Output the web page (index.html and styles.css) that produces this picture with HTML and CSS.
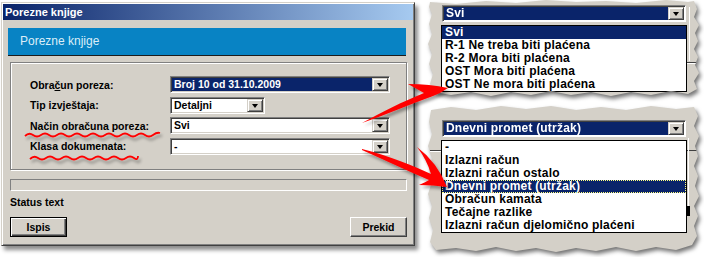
FILE: index.html
```html
<!DOCTYPE html>
<html lang="hr">
<head>
    <meta charset="UTF-8">
    <title>Porezne knjige</title>
    <link rel="stylesheet" href="styles.css">
</head>
<body>
<div class="stage">

    <div class="dialog">
        <div class="titlebar">Porezne knjige</div>
        <div class="dialog-body">
            <div class="banner">Porezne knjige</div>

            <div class="group">
                <div class="row">
                    <span class="label">Obra<u>č</u>un poreza:</span>
                    <div class="combo wide">
                        <span class="value selected">Broj 10 od 31.10.2009</span>
                        <span class="drop"></span>
                    </div>
                </div>
                <div class="row">
                    <span class="label">Tip izvještaja:</span>
                    <div class="combo narrow">
                        <span class="value">Detaljni</span>
                        <span class="drop"></span>
                    </div>
                </div>
                <div class="row">
                    <span class="label">Način obračuna poreza:</span>
                    <div class="combo wide">
                        <span class="value">Svi</span>
                        <span class="drop"></span>
                    </div>
                </div>
                <div class="row">
                    <span class="label">Klasa dokumenata:</span>
                    <div class="combo wide">
                        <span class="value">-</span>
                        <span class="drop"></span>
                    </div>
                </div>
            </div>

            <div class="progress"></div>
            <div class="status">Status text</div>

            <div class="buttons">
                <button class="btn default">Ispis</button>
                <button class="btn">Prekid</button>
            </div>
        </div>
    </div>

    <!-- isjecak: nacin obracuna -->
    <div class="piece piece-top">
        <div class="paper paper-top">
            <span class="deco" style="left:260px;top:63px;width:12px;height:1px;background:#404040"></span>
            <span class="deco" style="left:260px;top:64px;width:12px;height:1px;background:#fff"></span>
            <span class="deco" style="left:263px;top:8px;width:1px;height:54px;background:#fff"></span>
            <div class="big-combo">
                <span class="value selected">Svi</span>
                <span class="drop"></span>
            </div>
            <ul class="list">
                <li class="active">Svi</li>
                <li>R-1 Ne treba biti plaćena</li>
                <li>R-2 Mora biti plaćena</li>
                <li>OST Mora biti plaćena</li>
                <li>OST Ne mora biti plaćena</li>
            </ul>
        </div>
    </div>

    <!-- isjecak: klasa dokumenata -->
    <div class="piece piece-bottom">
        <div class="paper paper-bottom">
            <span class="deco" style="left:4px;top:46px;width:12px;height:1px;background:#404040"></span>
            <span class="deco" style="left:4px;top:47px;width:12px;height:1px;background:#fff"></span>
            <span class="deco" style="left:260px;top:46px;width:12px;height:1px;background:#404040"></span>
            <span class="deco" style="left:262px;top:34px;width:1px;height:76px;background:#fff"></span>
            <span class="deco" style="left:261px;top:102px;width:3px;height:10px;background:#000"></span>
            <div class="big-combo">
                <span class="value selected">Dnevni promet (utržak)</span>
                <span class="drop"></span>
            </div>
            <ul class="list">
                <li>-</li>
                <li>Izlazni račun</li>
                <li>Izlazni račun ostalo</li>
                <li class="active focus">Dnevni promet (utržak)</li>
                <li>Obračun kamata</li>
                <li>Tečajne razlike</li>
                <li>Izlazni račun djelomično plaćeni</li>
            </ul>
        </div>
    </div>

    <svg class="marks" width="704" height="257" viewBox="0 0 704 257">
        <defs>
            <filter id="sjena" x="-20%" y="-50%" width="140%" height="200%">
                <feDropShadow dx="2" dy="3" stdDeviation="1.6" flood-color="#000" flood-opacity="0.35"/>
            </filter>
        </defs>
        <g filter="url(#sjena)">
            <path class="wave" d="M25 136 q4 -4 8 -1 t8 0 t8 0 t8 0 t8 0 t8 0 t8 0 t8 0 t8 0 t8 0 t8 0 t8 0 t8 0 t8 0 t8 0 t8 0 t7 -2"/>
            <path class="wave" d="M30 159 q4 -4 8 -1 t8 0 t8 0 t8 0 t8 0 t8 0 t8 0 t8 0 t8 0 t8 0 t8 0 t8 0 t8 0 t4 -2"/>
            <path class="arrow" d="M362 123 C380 113 404 101 424 93 L408 84 Q430 84 448 88 Q441 93 433 96 C410 104 386 115 362 123 Z"/>
            <path class="arrow" d="M362 149 C390 156 414 166 431 174 Q427 160 417 147 Q437 162 447 187 Q433 185 419 185 Q426 182 429 180 C408 171 385 160 362 150 Z"/>
        </g>
    </svg>

</div>
</body>
</html>
```

FILE: styles.css
```css
body {
    margin: 0;
    background-color: #ffffff;
    font-family: "Liberation Sans", Arial, sans-serif;
    overflow: hidden;
}

.stage {
    position: relative;
    width: 704px;
    height: 257px;
    padding: 2px 0 0 1px;
    box-sizing: border-box;
}

/* glavni prozor */
.dialog {
    width: 414px;
    height: 244px;
    box-sizing: border-box;
    padding: 1px;
    background-color: #d4d0c8;
    border: 1px solid;
    border-color: #d4d0c8 #404040 #404040 #d4d0c8;
    box-shadow: inset 1px 1px 0 #ffffff, inset -1px -1px 0 #808080, 3px 4px 4px rgba(0, 0, 0, 0.45);
}

.titlebar {
    height: 16px;
    line-height: 16px;
    padding-left: 2px;
    color: #ffffff;
    font-size: 11px;
    font-weight: bold;
    background: linear-gradient(to right, #0a246a, #a6caf0);
}

.dialog-body {
    padding: 8px 6px 0 7px;
}

.banner {
    height: 28px;
    box-sizing: border-box;
    margin: 0 1px 0 -2px;
    padding-left: 12px;
    line-height: 27px;
    font-size: 12px;
    color: #dbeef8;
    background-color: #0883c4;
    border-bottom: 1px solid #1c1c1c;
}

.group {
    margin-top: 6px;
    height: 108px;
    box-sizing: border-box;
    padding: 13px 0 0 19px;
    border: 1px solid #808080;
    box-shadow: inset 1px 1px 0 #ffffff, 1px 1px 0 #ffffff;
    display: flex;
    flex-direction: column;
    gap: 3.5px;
}

.row {
    display: flex;
    align-items: center;
}

.label {
    width: 140px;
    font-size: 10.5px;
    font-weight: bold;
    color: #000000;
}

.label u {
    text-decoration-thickness: 1px;
}

.combo {
    height: 17px;
    box-sizing: border-box;
    padding: 1px;
    display: flex;
    background-color: #ffffff;
    border: 1px solid;
    border-color: #808080 #ffffff #ffffff #808080;
    box-shadow: inset 1px 1px 0 #404040, inset -1px -1px 0 #d4d0c8;
}

.combo.wide {
    width: 220px;
}

.combo.narrow {
    width: 95px;
}

.value {
    flex: 1;
    padding-left: 2px;
    line-height: 13px;
    font-size: 10.5px;
    font-weight: bold;
    color: #000000;
    white-space: nowrap;
    overflow: hidden;
}

.value.selected {
    background-color: #0a246a;
    color: #ffffff;
}

.drop {
    position: relative;
    width: 16px;
    height: 13px;
    box-sizing: border-box;
    background-color: #d4d0c8;
    border: 1px solid;
    border-color: #d4d0c8 #404040 #404040 #d4d0c8;
    box-shadow: inset 1px 1px 0 #ffffff, inset -1px -1px 0 #808080;
    display: flex;
    align-items: center;
    justify-content: center;
}

.drop::after {
    content: "";
    border-left: 3.5px solid transparent;
    border-right: 3.5px solid transparent;
    border-top: 4px solid #000000;
    margin-top: 1px;
}

.progress {
    margin-top: 9px;
    height: 12px;
    box-sizing: border-box;
    border: 1px solid;
    border-color: #808080 #ffffff #ffffff #808080;
}

.status {
    margin-top: 5px;
    line-height: 13px;
    font-size: 10.5px;
    font-weight: bold;
}

.buttons {
    margin-top: 8px;
    display: flex;
    justify-content: space-between;
}

.btn {
    width: 57px;
    height: 20px;
    padding: 0;
    font-family: "Liberation Sans", Arial, sans-serif;
    font-size: 10.5px;
    font-weight: bold;
    color: #000000;
    background-color: #d4d0c8;
    border: 1px solid;
    border-color: #ffffff #404040 #404040 #ffffff;
    box-shadow: inset -1px -1px 0 #808080;
}

.btn.default {
    border-color: #000000;
    box-shadow: inset 1px 1px 0 #ffffff, inset -1px -1px 0 #404040, inset -2px -2px 0 #808080;
}

/* isjecci sa strane */
.piece {
    position: absolute;
    left: 426px;
    width: 276px;
    filter: drop-shadow(2px 3px 2px rgba(0, 0, 0, 0.55));
}

.piece-top {
    top: -1px;
    height: 99px;
}

.piece-bottom {
    top: 104px;
    height: 152px;
}

.paper {
    position: relative;
    height: 100%;
    box-sizing: border-box;
    background-color: #d4d0c8;
    padding-left: 16px;
}

.paper-top {
    padding-top: 6px;
    clip-path: polygon(4px 3px, 30px 5px, 60px 2px, 90px 4px, 120px 1px, 150px 3px, 180px 2px, 210px 4px, 240px 1px, 262px 3px, 268px 2px, 271px 10px, 268px 18px, 273px 26px, 269px 34px, 272px 42px, 268px 50px, 272px 58px, 269px 66px, 273px 74px, 268px 82px, 271px 90px, 262px 95px, 245px 92px, 225px 96px, 205px 93px, 185px 97px, 165px 93px, 145px 96px, 125px 92px, 105px 96px, 85px 93px, 65px 97px, 45px 93px, 25px 96px, 8px 93px, 4px 85px, 7px 75px, 3px 65px, 6px 55px, 2px 45px, 6px 35px, 3px 25px, 6px 15px, 3px 8px);
}

.paper-bottom {
    padding-top: 16px;
    clip-path: polygon(5px 6px, 25px 3px, 50px 6px, 75px 2px, 100px 5px, 125px 2px, 150px 6px, 175px 3px, 200px 6px, 225px 2px, 250px 5px, 268px 3px, 272px 12px, 268px 22px, 273px 32px, 269px 42px, 272px 52px, 268px 62px, 272px 72px, 269px 82px, 273px 92px, 268px 102px, 272px 112px, 268px 122px, 271px 132px, 266px 141px, 250px 146px, 230px 143px, 210px 147px, 190px 143px, 170px 147px, 150px 144px, 130px 148px, 110px 144px, 90px 147px, 70px 143px, 50px 147px, 30px 144px, 10px 146px, 4px 138px, 7px 126px, 3px 114px, 6px 102px, 2px 90px, 6px 78px, 3px 66px, 6px 54px, 2px 42px, 6px 30px, 3px 18px);
}

.deco {
    position: absolute;
}

.big-combo {
    position: relative;
    width: 244px;
    height: 17px;
    box-sizing: border-box;
    padding: 1px;
    display: flex;
    background-color: #ffffff;
    border: 1px solid;
    border-color: #808080 #ffffff #ffffff #808080;
    box-shadow: inset 1px 1px 0 #404040;
}

.big-combo .value {
    font-size: 12px;
    line-height: 13px;
    letter-spacing: 0.2px;
}

.list {
    position: relative;
    list-style: none;
    margin: 3px 0 0 -1px;
    padding: 0;
    width: 246px;
    box-sizing: border-box;
    border: 1px solid #000000;
    background-color: #ffffff;
}

.list li {
    height: 13px;
    line-height: 13px;
    padding-left: 3px;
    font-size: 12px;
    letter-spacing: 0.2px;
    font-weight: bold;
    color: #000000;
    white-space: nowrap;
}

.list li.active {
    background-color: #0a246a;
    color: #ffffff;
}

.list li.focus {
    outline: 1px dotted #ffff80;
    outline-offset: -1px;
}

/* strelice i podcrtavanje */
.marks {
    position: absolute;
    left: 0;
    top: 0;
    pointer-events: none;
}

.wave {
    fill: none;
    stroke: #ff0000;
    stroke-width: 1.8;
}

.arrow {
    fill: #ff0000;
}
```
